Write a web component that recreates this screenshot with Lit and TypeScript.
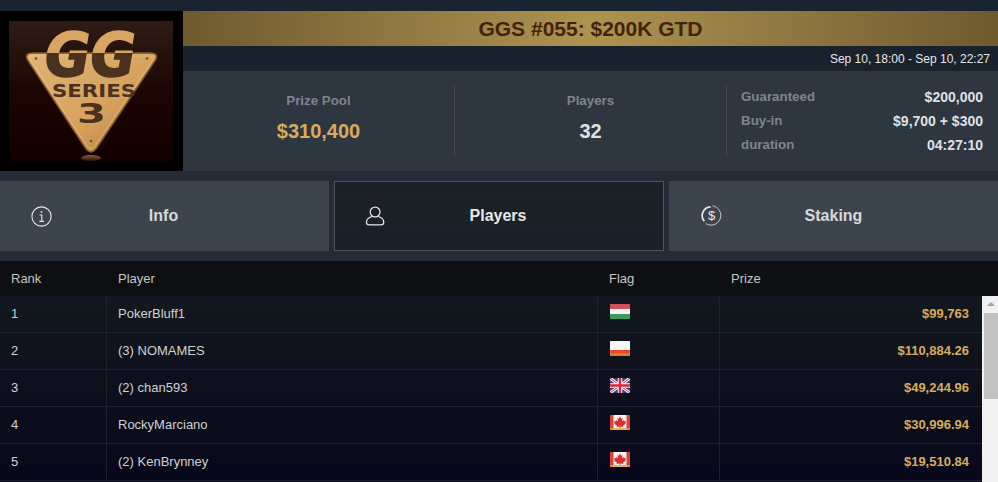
import { LitElement, html, css, svg } from 'lit';
import { customElement } from 'lit/decorators.js';

const players = [
  { rank: 1, name: 'PokerBluff1', flag: 'hu', prize: '$99,763' },
  { rank: 2, name: '(3) NOMAMES', flag: 'pl', prize: '$110,884.26' },
  { rank: 3, name: '(2) chan593', flag: 'gb', prize: '$49,244.96' },
  { rank: 4, name: 'RockyMarciano', flag: 'ca', prize: '$30,996.94' },
  { rank: 5, name: '(2) KenBrynney', flag: 'ca', prize: '$19,510.84' },
];

const flagArt: Record<string, unknown> = {
  hu: svg`<rect width="20" height="5" fill="#cf5156"/><rect y="5" width="20" height="5" fill="#f4f2f2"/><rect y="10" width="20" height="5" fill="#3c9c5e"/>`,
  pl: svg`<rect width="20" height="9" fill="#f6f6f6"/><rect y="9" width="20" height="3" fill="#e04a30"/><rect y="12" width="20" height="3" fill="#e2762c"/>`,
  gb: svg`<rect width="20" height="15" fill="#2f4488"/>
    <path d="M0 0L20 15M20 0L0 15" stroke="#f3f3f3" stroke-width="3"/>
    <path d="M0 0L20 15M20 0L0 15" stroke="#d5293f" stroke-width="1"/>
    <path d="M10 0V15M0 7.5H20" stroke="#f3f3f3" stroke-width="4.5"/>
    <path d="M10 0V15M0 7.5H20" stroke="#d5293f" stroke-width="2.5"/>`,
  ca: svg`<rect width="20" height="15" fill="#f6f3f0"/>
    <rect width="3.5" height="15" fill="#dc3f3f"/><rect x="16.5" width="3.5" height="15" fill="#dc3f3f"/>
    <path d="M10 1.5L11.2 3.8L12.6 3L12 6.4L13.6 5L14 6.2L16 5.9L15.3 8L16 8.4L13 10.8L13.4 12L10.4 11.6V13.5H9.6V11.6L6.6 12L7 10.8L4 8.4L4.7 8L4 5.9L6 6.2L6.4 5L8 6.4L7.4 3L8.8 3.8Z" fill="#d92f2f"/>
    <rect y="13" width="20" height="2" fill="#e8a040" opacity=".8"/>`,
};

@customElement('app-root')
export class AppRoot extends LitElement {
  static styles = css`
    :host {
      display: block;
      height: 100vh;
      overflow: hidden;
      background: #252c38;
      font-family: 'Liberation Sans', Arial, sans-serif;
      color: #dfe1e3;
    }
    .top {
      display: flex;
      height: 160px;
      padding-top: 11px;
      background: linear-gradient(#1a2430, #1a2430 11px, transparent 11px);
    }
    .logo {
      flex: 0 0 183px;
      box-sizing: border-box;
      padding: 10px 10px 10px 9px;
      background: #000;
    }
    .logo svg {
      display: block;
      width: 164px;
      height: 140px;
    }
    .head {
      flex: 1;
      display: flex;
      flex-direction: column;
    }
    .title {
      height: 35px;
      display: flex;
      align-items: center;
      justify-content: center;
      background: linear-gradient(90deg, #6f5a30, #ae9350 50%, #6f5a30);
      color: #43240a;
      font-size: 21px;
      font-weight: 700;
    }
    .date {
      height: 25px;
      box-sizing: border-box;
      padding: 0 8px 0 0;
      display: flex;
      align-items: center;
      justify-content: flex-end;
      background: #19222d;
      color: #e6e8ea;
      font-size: 12px;
    }
    .stats {
      flex: 1;
      display: grid;
      grid-template-columns: 272px 272px 1fr;
      align-items: center;
      background: #2e3640;
    }
    .stat {
      height: 70px;
      box-sizing: border-box;
      padding-bottom: 6px;
      display: flex;
      flex-direction: column;
      align-items: center;
      justify-content: center;
      gap: 12px;
      border-right: 1px solid #434a54;
    }
    .stat .label {
      color: #7e858d;
      font-size: 13.33px;
      font-weight: 700;
    }
    .stat .value {
      font-size: 20px;
      font-weight: 700;
      color: #dfe1e3;
    }
    .stat .value.gold {
      color: #d9ac5c;
    }
    .details {
      box-sizing: border-box;
      padding: 0 15px 1px 14px;
      display: grid;
      grid-template-columns: 1fr auto;
      row-gap: 6px;
      font-weight: 700;
    }
    .details span {
      font-size: 13.33px;
      line-height: 18px;
      color: #7e858d;
    }
    .details b {
      font-size: 14px;
      line-height: 18px;
      color: #dfe1e3;
      text-align: right;
    }
    .tabs {
      display: grid;
      grid-template-columns: 329px 330px 329px;
      gap: 5px;
      padding: 10px 0;
    }
    .tab {
      position: relative;
      height: 70px;
      box-sizing: border-box;
      padding-right: 2px;
      display: flex;
      align-items: center;
      justify-content: center;
      background: #3c444e;
      color: #d6d8da;
      font-size: 16px;
      font-weight: 700;
    }
    .tab.active {
      background: linear-gradient(#1c2026, #1a202a);
      border: 1px solid #50565c;
      color: #e6e8ea;
    }
    .tab svg {
      position: absolute;
      left: 31px;
      top: 25px;
      width: 21px;
      height: 21px;
    }
    .tab.active svg {
      left: 30px;
      top: 24px;
    }
    .tab.stake {
      padding-right: 0;
    }
    .tab.stake svg {
      left: 32px;
      top: 24px;
    }
    .row {
      display: grid;
      grid-template-columns: 107px 491px 122px 1fr;
      font-size: 13px;
    }
    .row > div {
      padding-left: 11px;
      display: flex;
      align-items: center;
    }
    .thead {
      height: 35px;
      background: #0d0f13;
      color: #c4c6c9;
    }
    .body {
      display: flex;
      height: 186px;
      overflow: hidden;
    }
    .list {
      flex: 1;
      background: linear-gradient(#13181f, #07071a);
    }
    .list .row {
      height: 37px;
      box-sizing: border-box;
      border-bottom: 1px solid #1d232d;
      color: #cfd1d4;
    }
    .list .row > div {
      padding-bottom: 2px;
      border-right: 1px solid #1d232d;
    }
    .list .row > div:last-child {
      border-right: 0;
      justify-content: flex-end;
      padding-right: 13px;
      color: #d9ac5c;
      font-weight: 700;
    }
    .flag {
      display: block;
      align-self: flex-start;
      margin: 8px 0 0 1px;
      width: 20px;
      height: 15px;
    }
    .scroll {
      flex: 0 0 16px;
      background: #f1f1f1;
      box-sizing: border-box;
      padding-left: 2px;
    }
    .arrow {
      width: 0;
      height: 0;
      margin: 6px 0 0 3px;
      border: 4px solid transparent;
      border-top: 0;
      border-bottom: 4px solid #a3a3a3;
    }
    .thumb {
      height: 86px;
      margin-top: 7px;
      background: #c1c1c1;
    }
  `;

  private logo() {
    return html`<svg viewBox="9 21 164 140" role="img" aria-label="GG Series 3">
      <defs>
        <linearGradient id="bg" x1="0" y1="0" x2="0" y2="1">
          <stop offset="0" stop-color="#2e1c15" />
          <stop offset=".5" stop-color="#1c0603" />
          <stop offset="1" stop-color="#120000" />
        </linearGradient>
        <linearGradient id="gold" x1="0" y1="0" x2="1" y2="1">
          <stop offset="0" stop-color="#e0b474" />
          <stop offset=".6" stop-color="#d6a05c" />
          <stop offset="1" stop-color="#a87436" />
        </linearGradient>
        <linearGradient id="glow" x1="0" y1="0" x2="0" y2="1">
          <stop offset="0" stop-color="#8a6238" />
          <stop offset="1" stop-color="#2a1208" />
        </linearGradient>
        <linearGradient id="gg" gradientUnits="userSpaceOnUse" x1="0" y1="32" x2="0" y2="77">
          <stop offset=".47" stop-color="#d7a664" />
          <stop offset=".47" stop-color="#4a3120" />
        </linearGradient>
      </defs>
      <rect x="9" y="21" width="164" height="140" fill="url(#bg)" />
      <ellipse cx="91" cy="158" rx="10" ry="3" fill="url(#glow)" />
      <path d="M33 53H150Q159 53 155.500 60L96 149Q91 155 86 149L27.500 60Q24 53 33 53Z"
        fill="url(#gold)" stroke="#7e5628" stroke-width="1.5" />
      <path d="M34 56H149Q155 56 152.500 60.500L95 146Q91 151 87 146L30.500 60.500Q28 56 34 56Z"
        fill="none" stroke="#eac68c" stroke-opacity=".55" />
      <circle cx="36" cy="58.500" r="1.300" fill="#6b4a28" />
      <circle cx="147" cy="58.500" r="1.300" fill="#6b4a28" />
      <circle cx="91" cy="141" r="1.300" fill="#6b4a28" />
      <text x="45" y="76" textLength="91" lengthAdjust="spacingAndGlyphs" fill="url(#gg)" stroke="url(#gg)"
        stroke-width="1.500" font-family="'DejaVu Sans', sans-serif" font-weight="700" font-style="italic"
        font-size="60">GG</text>
      <text x="52" y="97" textLength="84" lengthAdjust="spacingAndGlyphs" fill="#4a3120"
        font-family="'DejaVu Sans', sans-serif" font-weight="700" font-size="18">SERIES</text>
      <text x="77" y="123" textLength="29" lengthAdjust="spacingAndGlyphs" fill="#4a3120"
        font-family="'DejaVu Sans', sans-serif" font-weight="700" font-size="27">3</text>
    </svg>`;
  }

  private infoIcon() {
    return html`<svg viewBox="0 0 21 21" fill="none" stroke="#e6e8ea" stroke-width="1.1">
      <circle cx="10.5" cy="10.5" r="9.6" />
      <path d="M8.600 9H10.800V15.400M8.400 15.400H13" />
      <circle cx="10.500" cy="5.900" r=".9" fill="#e6e8ea" stroke="none" />
    </svg>`;
  }

  private userIcon() {
    return html`<svg viewBox="0 0 21 21" fill="none" stroke="#e6e8ea" stroke-width="1.2">
      <circle cx="10.100" cy="6" r="4.900" />
      <path d="M7 10.500C3.500 11.600 1.400 13.800 1.400 16.200C1.400 18 2.600 18.900 4.400 18.900H15.800C17.600 18.900 18.800 18 18.800 16.200C18.800 13.800 16.700 11.600 13.200 10.500" />
    </svg>`;
  }

  private stakeIcon() {
    return html`<svg viewBox="0 0 21 21" fill="none" stroke="#e6e8ea">
      <path d="M11.500 .8A9.700 9.700 0 1 1 4.600 18.400" stroke-width=".8" />
      <path d="M3.300 16.300A8.800 8.800 0 0 1 9.700 1.800" stroke-width="1.700" />
      <text x="10.500" y="15" font-size="13" text-anchor="middle" fill="#e6e8ea" stroke="none"
        font-weight="400">$</text>
    </svg>`;
  }

  render() {
    return html`
      <div class="top">
        <div class="logo">${this.logo()}</div>
        <div class="head">
          <div class="title">GGS #055: $200K GTD</div>
          <div class="date">Sep 10, 18:00 - Sep 10, 22:27</div>
          <div class="stats">
            <div class="stat">
              <div class="label">Prize Pool</div>
              <div class="value gold">$310,400</div>
            </div>
            <div class="stat">
              <div class="label">Players</div>
              <div class="value">32</div>
            </div>
            <div class="details">
              <span>Guaranteed</span><b>$200,000</b>
              <span>Buy-in</span><b>$9,700 + $300</b>
              <span>duration</span><b>04:27:10</b>
            </div>
          </div>
        </div>
      </div>
      <div class="tabs">
        <div class="tab">${this.infoIcon()}Info</div>
        <div class="tab active">${this.userIcon()}Players</div>
        <div class="tab stake">${this.stakeIcon()}Staking</div>
      </div>
      <div class="row thead">
        <div>Rank</div>
        <div>Player</div>
        <div>Flag</div>
        <div>Prize</div>
      </div>
      <div class="body">
        <div class="list">
          ${players.map(
            (p) => html`<div class="row">
              <div>${p.rank}</div>
              <div>${p.name}</div>
              <div><svg class="flag" viewBox="0 0 20 15">${flagArt[p.flag]}</svg></div>
              <div>${p.prize}</div>
            </div>`
          )}
        </div>
        <div class="scroll">
          <div class="arrow"></div>
          <div class="thumb"></div>
        </div>
      </div>
    `;
  }
}
